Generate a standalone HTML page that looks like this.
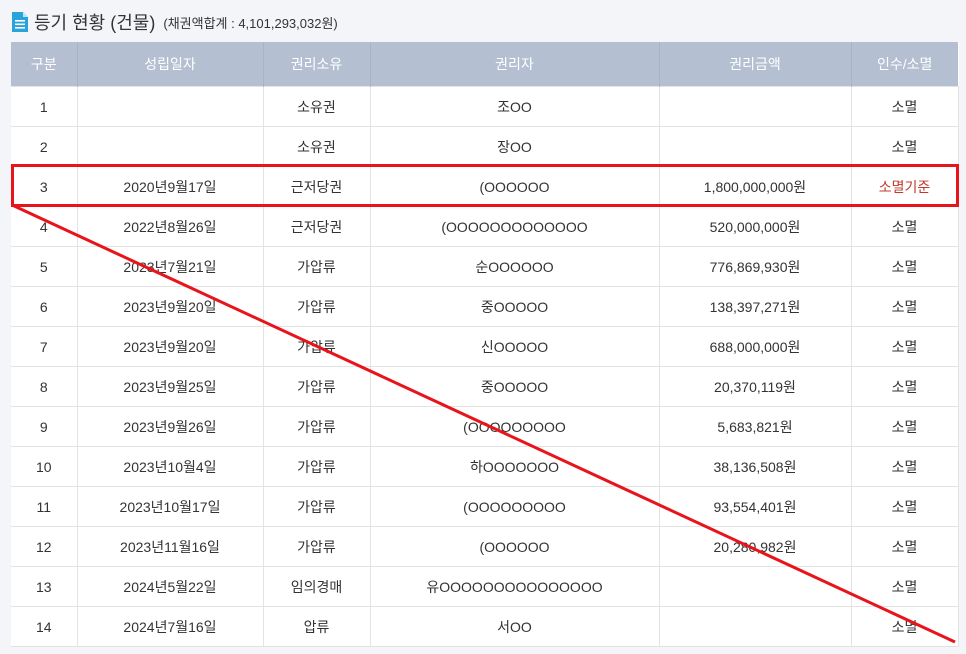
<!DOCTYPE html><html><head><meta charset="utf-8"><style>
body{margin:0;width:966px;height:654px;background:#f3f5f8;font-family:"Liberation Sans","Noto Sans CJK KR",sans-serif;position:relative;overflow:hidden}
.t{position:absolute;left:11px;top:9px;font-size:18px;color:#333;display:flex;align-items:center}
.t small{font-size:13px;margin-left:8px}
table{position:absolute;left:11px;top:42px;border-collapse:collapse;width:947px;table-layout:fixed;background:#fff;font-size:14px;color:#333}
th{background:#b5bfd2;color:#fff;font-weight:normal;height:44px;padding:0;border-left:1px solid #a9b3c6}
td{height:39px;padding:0;line-height:16px;text-align:center;border:1px solid #e3e3e3}
td:first-child,th:first-child{border-left:none}
.r{color:#c0392b}
</style></head><body>
<div class="t"><svg width="18" height="22" viewBox="0 0 18 22"><path d="M1 1h11l5 5v15H1z" fill="#29a3d9"/><path d="M12 1v5h5" fill="#bfe6f5"/><rect x="4" y="9" width="10" height="1.6" fill="#fff"/><rect x="4" y="12.5" width="10" height="1.6" fill="#fff"/><rect x="4" y="16" width="10" height="1.6" fill="#fff"/></svg>&nbsp;등기 현황 (건물)<small>(채권액합계 : 4,101,293,032원)</small></div>
<table>
<colgroup><col style="width:66px"><col style="width:186px"><col style="width:107px"><col style="width:289px"><col style="width:192px"><col style="width:107px"></colgroup>
<tr><th>구분</th><th>성립일자</th><th>권리소유</th><th>권리자</th><th>권리금액</th><th>인수/소멸</th></tr>
<tr><td>1</td><td></td><td>소유권</td><td>조OO</td><td></td><td>소멸</td></tr>
<tr><td>2</td><td></td><td>소유권</td><td>장OO</td><td></td><td>소멸</td></tr>
<tr><td>3</td><td>2020년9월17일</td><td>근저당권</td><td>(OOOOOO</td><td>1,800,000,000원</td><td class="r">소멸기준</td></tr>
<tr><td>4</td><td>2022년8월26일</td><td>근저당권</td><td>(OOOOOOOOOOOOO</td><td>520,000,000원</td><td>소멸</td></tr>
<tr><td>5</td><td>2023년7월21일</td><td>가압류</td><td>순OOOOOO</td><td>776,869,930원</td><td>소멸</td></tr>
<tr><td>6</td><td>2023년9월20일</td><td>가압류</td><td>중OOOOO</td><td>138,397,271원</td><td>소멸</td></tr>
<tr><td>7</td><td>2023년9월20일</td><td>가압류</td><td>신OOOOO</td><td>688,000,000원</td><td>소멸</td></tr>
<tr><td>8</td><td>2023년9월25일</td><td>가압류</td><td>중OOOOO</td><td>20,370,119원</td><td>소멸</td></tr>
<tr><td>9</td><td>2023년9월26일</td><td>가압류</td><td>(OOOOOOOOO</td><td>5,683,821원</td><td>소멸</td></tr>
<tr><td>10</td><td>2023년10월4일</td><td>가압류</td><td>하OOOOOOO</td><td>38,136,508원</td><td>소멸</td></tr>
<tr><td>11</td><td>2023년10월17일</td><td>가압류</td><td>(OOOOOOOOO</td><td>93,554,401원</td><td>소멸</td></tr>
<tr><td>12</td><td>2023년11월16일</td><td>가압류</td><td>(OOOOOO</td><td>20,280,982원</td><td>소멸</td></tr>
<tr><td>13</td><td>2024년5월22일</td><td>임의경매</td><td>유OOOOOOOOOOOOOOO</td><td></td><td>소멸</td></tr>
<tr><td>14</td><td>2024년7월16일</td><td>압류</td><td>서OO</td><td></td><td>소멸</td></tr>
</table>
<svg width="966" height="654" style="position:absolute;left:0;top:0"><rect x="12.5" y="165.5" width="945" height="40" fill="none" stroke="#e8141c" stroke-width="3"/><line x1="12" y1="205" x2="955" y2="642" stroke="#e8141c" stroke-width="3"/></svg>
</body></html>
